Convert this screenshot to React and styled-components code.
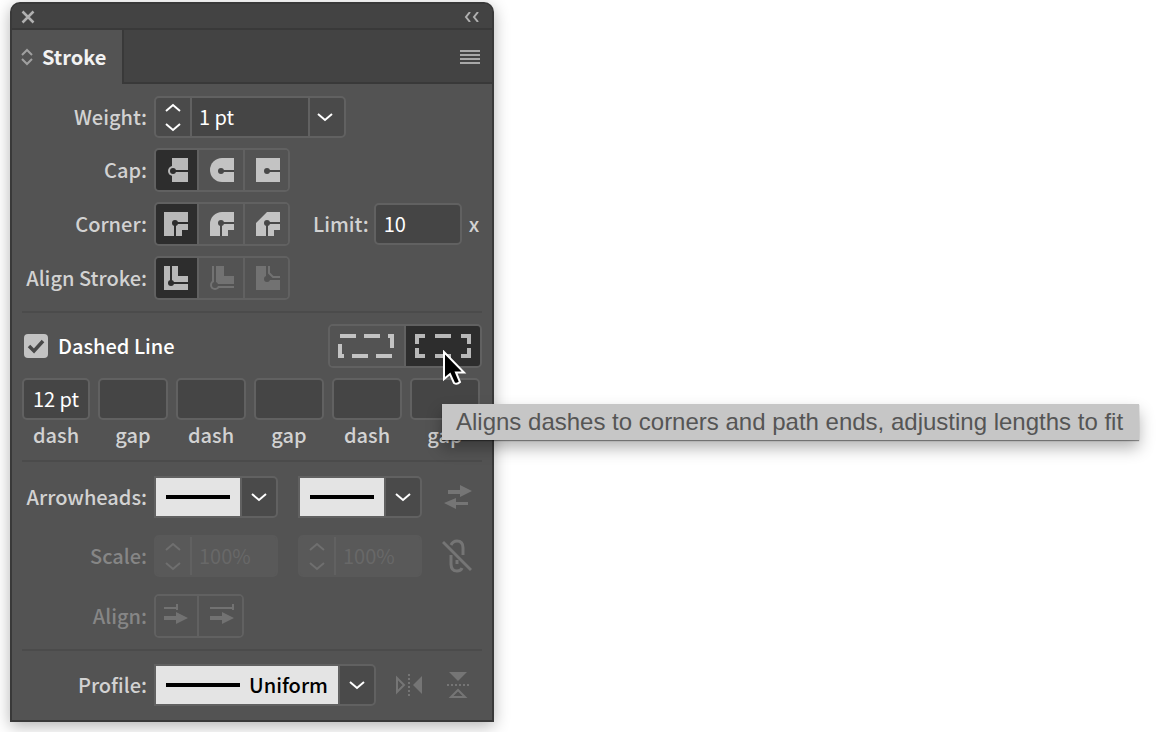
import React, { useState } from "react";
import styled, { createGlobalStyle } from "styled-components";

const GlobalStyle = createGlobalStyle`
  * {
    box-sizing: border-box;
  }

  body {
    margin: 0;
    background: #fff;
    font-family: "Noto Sans CJK SC", "Noto Sans", sans-serif;
  }

  button, input, select {
    font: inherit;
    color: inherit;
    margin: 0;
  }
`;

const Page = styled.main`
  padding: 2px 10px 10px;
`;

const Panel = styled.section`
  width: 100%;
  max-width: 484px;
  border: 2px solid #393939;
  border-radius: 10px 10px 0 0;
  background: #535353;
  color: #d2d2d2;
  font-size: 20px;
  line-height: 28px;
  box-shadow: 0 4px 16px rgba(0, 0, 0, 0.3);
`;

const TitleBar = styled.header`
  display: flex;
  align-items: center;
  justify-content: space-between;
  height: 26px;
  padding: 2px 12px 0 9px;
  background: #434343;
  border-bottom: 2px solid #393939;
  border-radius: 8px 8px 0 0;
`;

const PlainButton = styled.button`
  display: flex;
  padding: 0;
  border: none;
  background: none;
  cursor: pointer;
`;

const TabBar = styled.div`
  display: flex;
  align-items: stretch;
  justify-content: space-between;
  height: 54px;
  padding-right: 12px;
  background: linear-gradient(#434343 52px, #393939 52px);
`;

const Tab = styled.button`
  display: flex;
  align-items: center;
  gap: 9px;
  width: 112px;
  padding: 0 0 0 9px;
  border: none;
  border-right: 2px solid #393939;
  background: #535353;
  color: #f2f2f2;
  font-weight: bold;
`;

const Section = styled.div`
  display: grid;
  row-gap: ${(p) => p.$gap || 10}px;
  margin: 0 10px;
  padding: ${(p) => p.$top || 13}px 0 11px;

  & + & {
    border-top: 2px solid #4b4b4b;
  }

  &:last-child {
    padding-bottom: 14px;
  }
`;

const Row = styled.div`
  display: grid;
  grid-template-columns: 125px 1fr;
  column-gap: 7px;
  align-items: center;
`;

const Label = styled.label`
  text-align: right;
  white-space: nowrap;
  font-weight: 500;
  color: ${(p) => (p.$disabled ? "#868686" : "#d2d2d2")};
`;

const Controls = styled.div`
  display: flex;
  align-items: center;
`;

const Spaced = styled.div`
  display: flex;
  align-items: center;
  gap: 20px;
`;

const Field = styled.div`
  display: flex;
  width: ${(p) => p.$width}px;
  height: 42px;
  border: 2px solid ${(p) => (p.$disabled ? "#595959" : "#616161")};
  border-radius: 5px;
  background: ${(p) => (p.$disabled ? "#595959" : "#4a4a4a")};
  overflow: hidden;
`;

const Stepper = styled.div`
  display: flex;
  flex-direction: column;
  width: 36px;
  border-right: 2px solid #616161;

  button {
    flex: 1;
    align-items: center;
    justify-content: center;
    color: ${(p) => (p.$disabled ? "#6f6f6f" : "#fff")};
  }
`;

const FieldInput = styled.input`
  flex: 1;
  width: 0;
  padding: 0 7px;
  border: none;
  background: ${(p) => (p.disabled ? "#595959" : "#454545")};
  color: ${(p) => (p.disabled ? "#686868" : "#fff")};
`;

const TextBox = styled.input`
  width: ${(p) => p.$width || "100%"};
  height: 42px;
  padding: 0 ${(p) => (p.$center ? 0 : 8)}px 2px;
  border: 2px solid #616161;
  border-radius: 5px;
  background: #454545;
  color: #fff;
  text-align: ${(p) => (p.$center ? "center" : "left")};
`;

const MenuPart = styled.div`
  display: grid;
  width: 36px;
  padding-right: 4px;
  border-left: 2px solid #616161;
  align-items: center;
  justify-items: center;
  color: #fff;

  > * {
    grid-area: 1 / 1;
  }

  svg {
    pointer-events: none;
  }
`;

const BareSelect = styled.select`
  appearance: none;
  width: 100%;
  height: 100%;
  padding: 0;
  border: none;
  background: transparent;
`;

const Picker = styled.div`
  display: grid;
  grid-template-columns: 1fr 36px;
  align-items: center;
  width: ${(p) => p.$width}px;
  height: 42px;
  border: 2px solid #616161;
  border-radius: 0 5px 5px 0;
  background: linear-gradient(to left, #4a4a4a 34px, #616161 34px 36px, #e4e4e4 36px);
  color: #000;

  select {
    grid-area: 1 / 1 / 2 / 3;
    padding-left: 93px;
    font-weight: 500;
  }

  svg {
    grid-row: 1;
    pointer-events: none;
  }
`;

const Bar = styled.svg`
  grid-column: 1;
  margin-left: 10px;
`;

const PickerArrow = styled.span`
  display: flex;
  grid-area: 1 / 2;
  justify-content: center;
  padding-left: 2px;
  pointer-events: none;
  color: #fff;
`;

const Group = styled.div`
  display: flex;
  height: 44px;
  border: 2px solid #616161;
  border-radius: 5px;
`;

const Toggle = styled.button`
  display: flex;
  align-items: center;
  justify-content: center;
  width: ${(p) => p.$width || 46}px;
  padding: 0 0 0 ${(p) => (p.$wide ? 0 : 2)}px;
  border: none;
  border-right: 2px solid #616161;
  background: ${(p) => (p.$on ? "#2d2d2d" : "#535353")};
  color: ${(p) => (p.$on ? "#b8b8b8" : "#c3c3c3")};
  --hole: ${(p) => (p.$on ? "#2d2d2d" : "#484848")};

  &:first-child {
    padding: 0 2px 0 0;
    border-radius: 3px 0 0 3px;
  }

  &:last-child {
    border-right: none;
    border-radius: 0 3px 3px 0;
  }

  &:disabled {
    color: #727272;
    --hole: #535353;
  }
`;

const LimitLabel = styled(Label)`
  margin: 0 5px 0 23px;
`;

const Unit = styled.span`
  margin-left: 7px;
  font-weight: 500;
`;

const DashHeader = styled.div`
  display: flex;
  align-items: center;
  justify-content: space-between;
`;

const CheckLabel = styled.label`
  display: flex;
  align-items: center;
  gap: 10px;
  padding-left: 2px;
  color: #fff;
  font-weight: 500;
`;

const Checkbox = styled.input`
  appearance: none;
  width: 24px;
  height: 24px;
  border-radius: 4px;
  background: #c3c3c3;

  &:checked {
    background: #c3c3c3
      url("data:image/svg+xml,%3Csvg xmlns='http://www.w3.org/2000/svg' viewBox='0 0 24 24'%3E%3Cpath d='M5 12l5 5L19 7' fill='none' stroke='%23484848' stroke-width='3.500'/%3E%3C/svg%3E");
  }
`;

const TipAnchor = styled.div`
  position: relative;
`;

const Cursor = styled.svg`
  position: absolute;
  left: 114px;
  top: 26px;
  z-index: 2;
  pointer-events: none;
`;

const Tooltip = styled.div`
  position: absolute;
  left: 114px;
  top: 80px;
  z-index: 1;
  padding: 0 16px 0 14px;
  background: #c6c6c6;
  color: #555;
  font-family: "Liberation Sans", Arial, sans-serif;
  font-size: 24px;
  line-height: 36px;
  white-space: nowrap;
  box-shadow: 0 1px 1px rgba(0, 0, 0, 0.4), 0 8px 16px rgba(0, 0, 0, 0.3);
`;

const DashFields = styled.div`
  display: grid;
  grid-template-columns: 68fr repeat(5, 70fr);
  gap: 8px;
  padding-right: 2px;
`;

const DashField = styled.label`
  display: flex;
  flex-direction: column;
  gap: 1px;
  text-align: center;
  font-weight: 500;

  input {
    font-weight: normal;
  }
`;

const SideIcon = styled(PlainButton)`
  color: #757575;
`;

const Flips = styled.div`
  display: flex;
  align-items: center;
  gap: 24px;
  margin-left: 20px;
`;

const Chevron = ({ up }) => (
  <svg width="16" height="10" viewBox="0 0 16 10" fill="none" stroke="currentColor" strokeWidth="2">
    <path d={up ? "M1 8L8 2L15 8" : "M1 2L8 8L15 2"} />
  </svg>
);

const Icon = ({ children }) => (
  <svg width="24" height="24" viewBox="0 0 24 24" fill="currentColor">
    {children}
  </svg>
);

const Hole = ({ x, y, d }) => (
  <g style={{ fill: "var(--hole)" }}>
    <circle cx={x} cy={y} r="3" />
    <path d={d} />
  </g>
);

const CAPS = [
  ["Butt cap", <>
    <path d="M8 0H24V24H8z" />
    <circle cx="9" cy="13" r="5" />
    <Hole x="9" y="13" d="M9 12H24V14H9z" />
  </>],
  ["Round cap", <>
    <path d="M12 0H24V24H12A12 12 0 0 1 12 0z" />
    <Hole x="11" y="13" d="M11 12H24V14H11z" />
  </>],
  ["Projecting cap", <>
    <path d="M0 0H24V24H0z" />
    <Hole x="11" y="13" d="M11 12H24V14H11z" />
  </>],
];

const cornerHole = <Hole x="11" y="11" d="M10 10H24V12H12V24H10z" />;

const CORNERS = [
  ["Miter join", <><path d="M0 0H24V18H18V24H0z" />{cornerHole}</>],
  ["Round join", <><path d="M12 0H24V18H18V24H0V12A12 12 0 0 1 12 0z" />{cornerHole}</>],
  ["Bevel join", <><path d="M11 0H24V18H18V24H0V11z" />{cornerHole}</>],
];

const ALIGNS = [
  ["Align stroke to center", <>
    <path d="M0 0H14V10H24V24H0z" />
    <Hole x="7" y="17" d="M6 0H8V16H24V18H6z" />
  </>],
  ["Align stroke to inside", <>
    <path d="M6 0H14V10H24V18H6z" />
    <circle cx="5" cy="19" r="5" />
    <path d="M2 0H4V16H2zM7 20H24V22H7z" />
    <Hole x="5" y="19" d="M4 0H6V18H24V20H4z" />
  </>],
  ["Align stroke to outside", <>
    <path d="M0 0H10V12H12V14H24V24H0z" />
    <path d="M13 0V7L17 11H24" fill="none" stroke="currentColor" strokeWidth="2" />
    <Hole x="11" y="13" d="M10 0H12V12H24V14H10z" />
  </>],
];

function ToggleGroup({ name, items, disabledFrom = 9 }) {
  const [active, setActive] = useState(0);
  return (
    <Group role="group" aria-label={name}>
      {items.map(([label, art], i) => (
        <Toggle
          key={label}
          type="button"
          aria-label={label}
          aria-pressed={active === i}
          $on={active === i}
          $width={i === 1 ? 46 : 43}
          disabled={i >= disabledFrom}
          onClick={() => setActive(i)}
        >
          <Icon>{art}</Icon>
        </Toggle>
      ))}
    </Group>
  );
}

function StepperButtons({ name, disabled }) {
  return (
    <Stepper $disabled={disabled}>
      <PlainButton type="button" disabled={disabled} aria-label={`Increase ${name}`}><Chevron up /></PlainButton>
      <PlainButton type="button" disabled={disabled} aria-label={`Decrease ${name}`}><Chevron /></PlainButton>
    </Stepper>
  );
}

function ArrowPicker({ id, label }) {
  return (
    <Picker $width={124}>
      <Bar width="64" height="4"><rect width="64" height="4" /></Bar>
      <BareSelect id={id} aria-label={label}>
        <option value="none" aria-label="None" />
      </BareSelect>
      <PickerArrow><Chevron /></PickerArrow>
    </Picker>
  );
}

function ScaleField({ id, label }) {
  return (
    <Field $width={124} $disabled>
      <StepperButtons name={label} disabled />
      <FieldInput id={id} aria-label={label} defaultValue="100%" disabled />
    </Field>
  );
}

function DashAlign() {
  const [active, setActive] = useState(1);
  return (
    <TipAnchor>
      <Group role="group" aria-label="Dash alignment">
        <Toggle type="button" $wide $width={76} $on={active === 0} onClick={() => setActive(0)} aria-label="Preserve exact dash and gap lengths">
          <svg width="56" height="24" fill="currentColor">
            <path d="M2 0H18V4H2zM26 0H42V4H26zM50 0H56V14H52V4H50zM14 20H30V24H14zM38 20H54V24H38zM0 10H4V20H6V24H0z" />
          </svg>
        </Toggle>
        <Toggle type="button" $wide $width={74} $on={active === 1} onClick={() => setActive(1)} aria-describedby="dash-tip" aria-label="Align dashes to corners">
          <svg width="56" height="24" fill="currentColor">
            <path d="M0 0H10V4H4V10H0zM20 0H36V4H20zM46 0H56V10H52V4H46zM0 14H4V20H10V24H0zM20 20H36V24H20zM52 14H56V24H46V20H52z" />
          </svg>
        </Toggle>
      </Group>
      <Cursor width="26" height="38" viewBox="0 0 26 38">
        <path d="M2 2V29L8 24L12 33Q15 35 18 32L14 22.500H22z" fill="#000" stroke="#fff" strokeWidth="2" />
      </Cursor>
      <Tooltip role="tooltip" id="dash-tip">Aligns dashes to corners and path ends, adjusting lengths to fit</Tooltip>
    </TipAnchor>
  );
}

const DASHES = ["dash", "gap", "dash", "gap", "dash", "gap"];

export default function App() {
  return (
    <Page>
      <GlobalStyle />
      <Panel aria-label="Stroke panel">
        <TitleBar>
          <PlainButton type="button" aria-label="Close">
            <svg width="14" height="14" fill="none" stroke="#b0b0b0" strokeWidth="2.500">
              <path d="M1.500 1.500L12.500 12.500M12.500 1.500L1.500 12.500" />
            </svg>
          </PlainButton>
          <PlainButton type="button" aria-label="Collapse">
            <svg width="16" height="10" fill="none" stroke="#b0b0b0" strokeWidth="2">
              <path d="M6 0L2 5L6 10M14 0L10 5L14 10" />
            </svg>
          </PlainButton>
        </TitleBar>
        <TabBar>
          <Tab type="button">
            <svg width="12" height="18" fill="none" stroke="#a0a0a0" strokeWidth="2">
              <path d="M1 7L6 2L11 7M1 11L6 16L11 11" />
            </svg>
            Stroke
          </Tab>
          <PlainButton type="button" aria-label="Panel menu">
            <svg width="20" height="54" fill="#a8a8a8">
              <path d="M0 20H20V22H0zM0 24H20V26H0zM0 28H20V30H0zM0 32H20V34H0z" />
            </svg>
          </PlainButton>
        </TabBar>

        <Section $top={12}>
          <Row>
            <Label htmlFor="weight">Weight:</Label>
            <Field $width={192}>
              <StepperButtons name="weight" />
              <FieldInput id="weight" defaultValue="1 pt" />
              <MenuPart>
                <BareSelect aria-label="Weight presets"><option value="1" aria-label="1 pt" /></BareSelect>
                <Chevron />
              </MenuPart>
            </Field>
          </Row>
          <Row>
            <Label as="span">Cap:</Label>
            <Controls><ToggleGroup name="Cap" items={CAPS} /></Controls>
          </Row>
          <Row>
            <Label as="span">Corner:</Label>
            <Controls>
              <ToggleGroup name="Corner" items={CORNERS} />
              <LimitLabel htmlFor="limit">Limit:</LimitLabel>
              <TextBox id="limit" $width="88px" defaultValue="10" />
              <Unit>x</Unit>
            </Controls>
          </Row>
          <Row>
            <Label as="span">Align Stroke:</Label>
            <Controls><ToggleGroup name="Align Stroke" items={ALIGNS} disabledFrom={1} /></Controls>
          </Row>
        </Section>

        <Section $top={11}>
          <DashHeader>
            <CheckLabel>
              <Checkbox type="checkbox" defaultChecked />
              Dashed Line
            </CheckLabel>
            <DashAlign />
          </DashHeader>
          <DashFields>
            {DASHES.map((name, i) => (
              <DashField key={i}>
                <TextBox $center defaultValue={i === 0 ? "12 pt" : ""} />
                {name}
              </DashField>
            ))}
          </DashFields>
        </Section>

        <Section $gap={17} $top={14}>
          <Row>
            <Label htmlFor="arrow-start">Arrowheads:</Label>
            <Spaced>
              <ArrowPicker id="arrow-start" label="Start arrowhead" />
              <ArrowPicker id="arrow-end" label="End arrowhead" />
              <SideIcon type="button" aria-label="Swap arrowheads" disabled>
                <svg width="32" height="26" fill="currentColor">
                  <path d="M6 6H18V1L30 7L18 13V10H6zM26 18H14V14L2 19L14 25V21H26z" />
                </svg>
              </SideIcon>
            </Spaced>
          </Row>
          <Row>
            <Label $disabled htmlFor="scale-start">Scale:</Label>
            <Spaced>
              <ScaleField id="scale-start" label="start scale" />
              <ScaleField id="scale-end" label="end scale" />
              <SideIcon type="button" aria-label="Link scales" disabled>
                <svg width="30" height="34" fill="none" stroke="currentColor" strokeWidth="3">
                  <path d="M9 6Q11 2 15 2Q21 2 21 9V16M9 16V25Q9 32 15 32Q19 32 20 29M15 21V25" />
                  <path d="M1 3L29 31" />
                </svg>
              </SideIcon>
            </Spaced>
          </Row>
          <Row>
            <Label as="span" $disabled>Align:</Label>
            <Controls>
              <Group role="group" aria-label="Align arrowheads">
                <Toggle type="button" $width={43} disabled aria-label="Extend arrow tip beyond end of path">
                  <Icon><path d="M0 3H12V0H14V6H12V5H0zM0 12H12V8L24 14L12 20V16H0z" /></Icon>
                </Toggle>
                <Toggle type="button" $width={43} disabled aria-label="Place arrow tip at end of path">
                  <Icon><path d="M0 3H22V0H24V6H22V5H0zM0 12H12V8L24 14L12 20V16H0z" /></Icon>
                </Toggle>
              </Group>
            </Controls>
          </Row>
        </Section>

        <Section>
          <Row>
            <Label htmlFor="profile">Profile:</Label>
            <Controls>
              <Picker $width={222}>
                <Bar width="74" height="4"><rect width="74" height="4" /></Bar>
                <BareSelect id="profile"><option>Uniform</option></BareSelect>
                <PickerArrow><Chevron /></PickerArrow>
              </Picker>
              <Flips>
                <SideIcon type="button" aria-label="Flip along" disabled>
                  <svg width="26" height="24" fill="currentColor">
                    <path d="M26 3V21L17 12z" />
                    <path d="M1 5V19L8 12z" fill="none" stroke="currentColor" strokeWidth="2" />
                    <path d="M13 1V24" stroke="currentColor" strokeWidth="2" strokeDasharray="2 2" />
                  </svg>
                </SideIcon>
                <SideIcon type="button" aria-label="Flip across" disabled>
                  <svg width="24" height="28" fill="currentColor">
                    <path d="M3 1H21L12 10z" />
                    <path d="M5 26H19L12 19z" fill="none" stroke="currentColor" strokeWidth="2" />
                    <path d="M1 14H24" stroke="currentColor" strokeWidth="2" strokeDasharray="2 2" />
                  </svg>
                </SideIcon>
              </Flips>
            </Controls>
          </Row>
        </Section>
      </Panel>
    </Page>
  );
}
